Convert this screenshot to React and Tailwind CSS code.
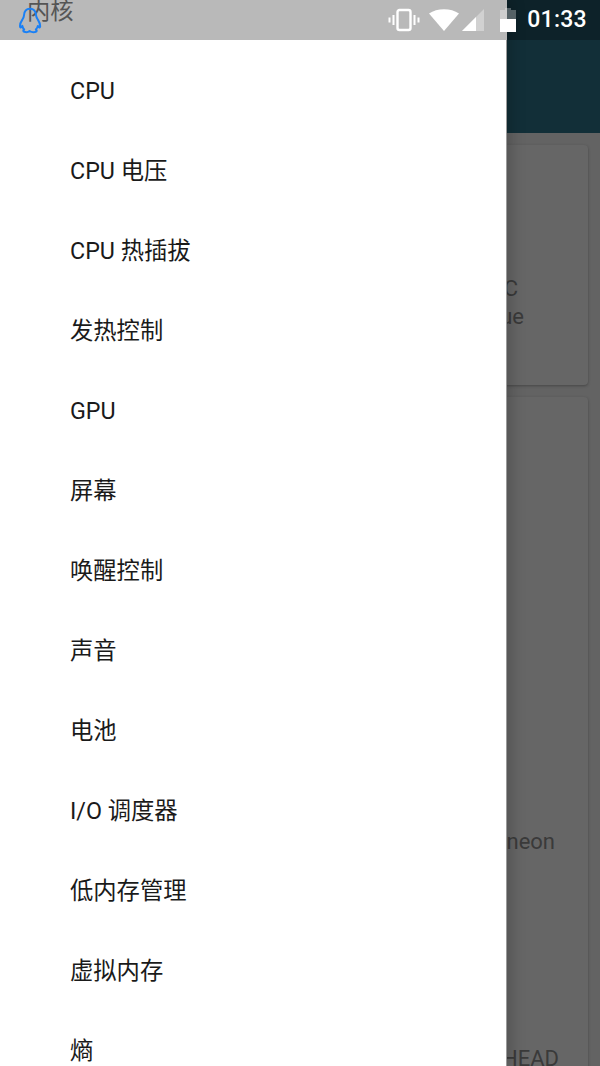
import React from "react";

const items = ["CPU","CPU 电压","CPU 热插拔","发热控制","GPU","屏幕","唤醒控制","声音","电池","I/O 调度器","低内存管理","虚拟内存","熵"];

function Penguin() {
  return (
    <svg width="26" height="27" viewBox="0 0 28 30" fill="none" stroke="#1a80f5" strokeWidth="2.200" strokeLinejoin="round" strokeLinecap="round">
      <path d="M14 2C9 2 7.500 5.500 7.300 9.500C7.200 11.500 6.500 12.500 5.500 14C3.800 16.500 2.500 19 3 22C3.300 23.500 4.500 22.500 5.500 21C6 23 6.500 24 7.500 25C6.500 25.500 6 27 7.500 27.500C9.500 28.200 12 28 13.500 26.700C15 28 18.500 28.300 20.500 27.500C22 27 21.500 25.500 20.500 25C21.500 24 22.300 23 22.700 21C23.700 22.500 24.800 23.500 25.200 22C25.700 19 24.300 16.500 22.700 14C21.700 12.500 21 11.500 20.800 9.500C20.500 5.500 19 2 14 2Z" />
    </svg>
  );
}

function StatusIcons() {
  return (
    <div className="flex items-center h-10 pr-[13px]">
      <svg width="32" height="24" viewBox="0 0 32 24" className="mr-[9px]" fill="none">
        <rect x="9.500" y="2" width="13" height="20" rx="2" stroke="#fff" strokeWidth="2.400" />
        <rect x="4.500" y="7" width="2" height="10" fill="#fff" />
        <rect x="25.500" y="7" width="2" height="10" fill="#fff" />
        <rect x="0.500" y="9.500" width="2" height="5" fill="#fff" />
        <rect x="29.500" y="9.500" width="2" height="5" fill="#fff" />
      </svg>
      <svg width="30" height="22" viewBox="0 0 30 22" className="mr-[2px]">
        <path d="M0 4.500C8 -1.300 22 -1.300 30 4.500L15 22Z" fill="#fff" />
      </svg>
      <svg width="24" height="24" viewBox="0 0 24 24" className="mr-[15px]">
        <path d="M23 1V23H1Z" fill="#fff" fillOpacity="0.35" />
        <path d="M15 9V23H1Z" fill="#fff" />
      </svg>
      <svg width="16" height="24" viewBox="0 0 16 24" className="mr-[11px]">
        <path d="M5 0H11V2H16V24H0V2H5Z" fill="#fff" fillOpacity="0.3" />
        <rect x="0" y="11" width="16" height="13" fill="#fff" />
      </svg>
      <span className="text-white text-[23px] font-medium tracking-[0.3px]">01:33</span>
    </div>
  );
}

export default function App() {
  return (
    <div className="relative w-[600px] h-[1066px] overflow-hidden bg-[#666666] font-['Roboto','Noto_Sans_CJK_SC',sans-serif]">
      <div className="flex flex-col h-full">
        <div className="h-10 shrink-0 bg-[#0d2229]" />
        <div className="h-[93px] shrink-0 bg-[#122f38]" />
        <div className="flex flex-col gap-3 pt-3 px-3 flex-1 min-h-0 bg-[#636363]">
          <div className="h-[240px] shrink-0 rounded bg-[#666666] shadow-[0_1px_3px_rgba(0,0,0,0.3)] flex flex-col justify-center items-end pt-[76px] pr-[70px] text-[22px] leading-[28px] text-[#3a3a3a]">
            <span>C</span>
            <span className="mr-[-6px]">ue</span>
          </div>
          <div className="flex-1 rounded-t bg-[#666666] shadow-[0_1px_3px_rgba(0,0,0,0.3)] flex flex-col items-end pr-[33px] pt-[428px] text-[22px] text-[#3a3a3a]">
            <span>neon</span>
            <span className="mt-[184px] mr-[-4px]">HEAD</span>
          </div>
        </div>
      </div>

      <div className="absolute top-0 left-0 bottom-0 w-[507px] bg-white border-r border-[#9a9a9a] shadow-[4px_0_14px_rgba(0,0,0,0.2)] pt-[51px]">
        {items.map((t) => (
          <div key={t} className="h-20 flex items-center pl-[70px] text-[23.300px] text-[#1a1a1a]">{t}</div>
        ))}
      </div>

      <div className="absolute top-0 left-0 w-[507px] h-10 bg-[#b9b9b9] overflow-hidden">
        <span className="absolute left-[27px] top-[-4px] text-[23.300px] leading-[30px] text-[#555555]">内核</span>
        <span className="absolute left-[17px] top-[7px]"><Penguin /></span>
      </div>
      <div className="absolute top-0 right-0">
        <StatusIcons />
      </div>
    </div>
  );
}
